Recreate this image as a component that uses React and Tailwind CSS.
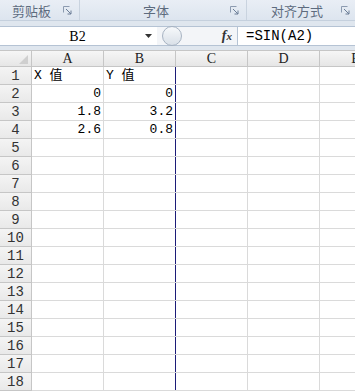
const cols = ['A', 'B', 'C', 'D', 'E'];
const widths = ['w-[72px]', 'w-[72px]', 'w-[72px]', 'w-[72px]', 'w-[72px]'];

const data = {
  1: ['X 值', 'Y 值'],
  2: ['0', '0'],
  3: ['1.8', '3.2'],
  4: ['2.6', '0.8'],
};

const rows = Array.from({ length: 18 }, (_, i) => i + 1);

function Launcher() {
  return (
    <svg width="9" height="9" viewBox="0 0 9 9" className="shrink-0">
      <path d="M0.5 0.5h6M0.5 0.5v6" stroke="#8c9bb0" strokeWidth="1" fill="none" />
      <path d="M3 3l5 5M8 4.5v3.5h-3.5" stroke="#6b7d96" strokeWidth="1" fill="none" />
    </svg>
  );
}

export default function App() {
  return (
    <div
      className="w-[355px] h-[391px] overflow-hidden bg-[#dfe6ee] select-none"
      style={{ fontFamily: '"Liberation Mono", "Noto Sans CJK SC", monospace' }}
    >
      {/* ribbon group labels */}
      <div className="flex h-[21px] bg-gradient-to-b from-[#e9eef5] to-[#dde5ef] border-b border-[#c5d0dd] text-[13px] text-[#5d6b7e] font-['Noto_Sans_CJK_SC',sans-serif]">
        <div className="w-[80px] flex items-center pl-[12px] pr-[7px] border-r border-[#c9d3df]">
          <span className="flex-1 leading-none">剪贴板</span>
          <Launcher />
        </div>
        <div className="w-[167px] flex items-center pr-[7px] border-r border-[#c9d3df]">
          <span className="flex-1 text-center pl-[2px] leading-none">字体</span>
          <Launcher />
        </div>
        <div className="flex-1 flex items-center pr-[5px]">
          <span className="flex-1 text-center pl-[6px] leading-none">对齐方式</span>
          <Launcher />
        </div>
      </div>

      {/* formula bar */}
      <div className="mt-[5px] flex h-[20px] items-stretch">
        <div className="w-[157px] flex items-center bg-white border-y border-[#b5c3d4]">
          <span className="flex-1 text-center text-[14px] text-black pl-[10px] font-['Liberation_Serif',serif]">B2</span>
          <svg width="7" height="4" viewBox="0 0 7 4" className="mr-[5px]">
            <path d="M0 0h7L3.5 4z" fill="#333" />
          </svg>
        </div>
        <div className="w-[80px] flex items-center bg-[#f3f5f8] border-y border-[#b5c3d4] relative">
          <div className="absolute left-[5px] top-[-1px] w-[20px] h-[20px] rounded-full border border-[#a7b3c2] bg-gradient-to-b from-[#f7f9fb] to-[#d9e0e8]" />
          <span className="ml-auto mr-[5px] text-[14px] italic font-bold text-[#333] font-['Liberation_Serif',serif] leading-none">
            f<span className="text-[11px]">x</span>
          </span>
        </div>
        <div className="flex-1 flex items-center bg-white border border-r-0 border-[#b5c3d4] pl-[8px] text-[14px] text-black">
          =SIN(A2)
        </div>
      </div>

      {/* grid */}
      <div className="mt-[4px] bg-white">
        <div className="flex h-[17px] bg-gradient-to-b from-[#f6f6f6] to-[#e6e6e6] border-t border-[#c6c6c6] border-b border-[#c6c6c6]">
          <div className="w-[32px] shrink-0 border-r border-[#c6c6c6] flex items-end justify-end pr-[3px] pb-[2px]">
            <svg width="9" height="9" viewBox="0 0 9 9">
              <path d="M9 0V9H0z" fill="#cfcfcf" />
            </svg>
          </div>
          {cols.map((c, i) => (
            <div
              key={c}
              className={`${widths[i]} shrink-0 border-r border-[#c6c6c6] flex items-center justify-center text-[14px] text-[#222] leading-none font-['Liberation_Serif',serif]`}
            >
              {c}
            </div>
          ))}
        </div>
        {rows.map((r) => (
          <div key={r} className="flex h-[18px] border-b border-[#dadada]">
            <div className="w-[32px] shrink-0 -mb-px bg-gradient-to-b from-[#f4f4f4] to-[#e9e9e9] border-r border-b border-[#c6c6c6] flex items-center justify-center text-[14px] text-[#333] leading-none">
              {r}
            </div>
            {cols.map((c, i) => {
              const v = data[r] ? data[r][i] : undefined;
              const text = r === 1;
              return (
                <div
                  key={c}
                  className={`${widths[i]} shrink-0 flex items-center text-[13px] text-black leading-none ${
                    i === 1 ? 'border-r-[1.5px] border-[#1c1c78]' : 'border-r border-[#dadada]'
                  } ${text ? 'justify-start pl-[2px]' : 'justify-end pr-[2px]'}`}
                >
                  {v}
                </div>
              );
            })}
          </div>
        ))}
      </div>
    </div>
  );
}
